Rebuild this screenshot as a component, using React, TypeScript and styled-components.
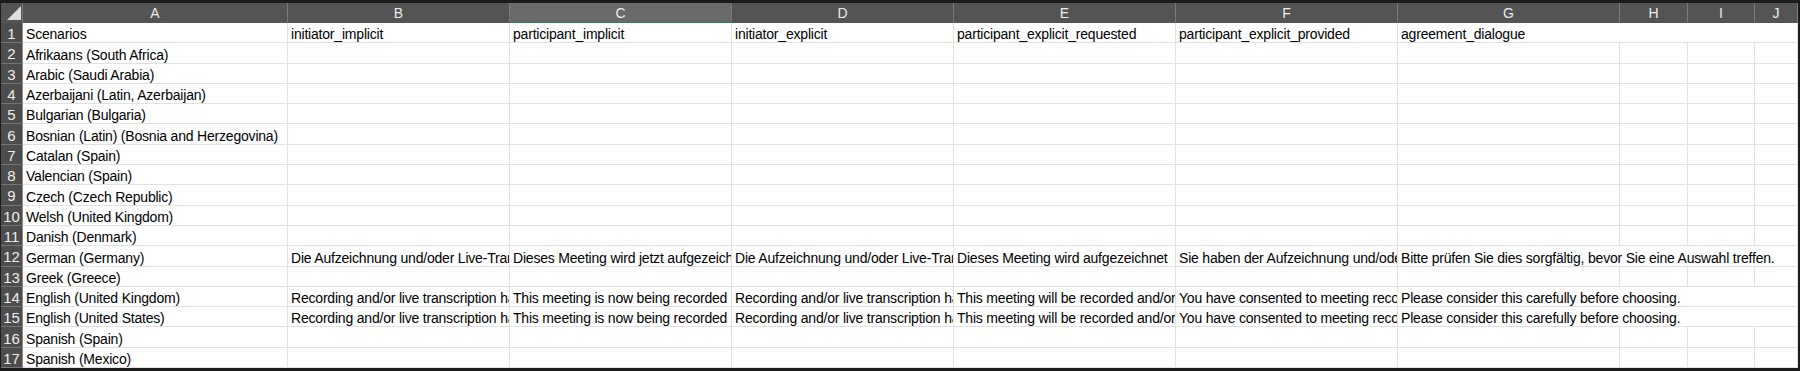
import React from 'react';
import styled, { createGlobalStyle } from 'styled-components';

const GlobalStyle = createGlobalStyle`
  html, body {
    margin: 0;
    padding: 0;
    background: #ffffff;
  }
`;

const COLUMNS = ['A', 'B', 'C', 'D', 'E', 'F', 'G', 'H', 'I', 'J'];
const SELECTED_COL = 'C';

const de = [
  'Die Aufzeichnung und/oder Live-Transkription hat begonnen.',
  'Dieses Meeting wird jetzt aufgezeichnet und/oder transkribiert.',
  'Die Aufzeichnung und/oder Live-Transkription hat begonnen.',
  'Dieses Meeting wird aufgezeichnet',
  'Sie haben der Aufzeichnung und/oder Transkription zugestimmt.',
  'Bitte prüfen Sie dies sorgfältig, bevor Sie eine Auswahl treffen.',
];

const en = [
  'Recording and/or live transcription has started.',
  'This meeting is now being recorded and/or transcribed.',
  'Recording and/or live transcription has started.',
  'This meeting will be recorded and/or transcribed.',
  'You have consented to meeting recording and/or transcription.',
  'Please consider this carefully before choosing.',
];

const rows: string[][] = [
  ['Scenarios', 'initiator_implicit', 'participant_implicit', 'initiator_explicit', 'participant_explicit_requested', 'participant_explicit_provided', 'agreement_dialogue'],
  ['Afrikaans (South Africa)'],
  ['Arabic (Saudi Arabia)'],
  ['Azerbaijani (Latin, Azerbaijan)'],
  ['Bulgarian (Bulgaria)'],
  ['Bosnian (Latin) (Bosnia and Herzegovina)'],
  ['Catalan (Spain)'],
  ['Valencian (Spain)'],
  ['Czech (Czech Republic)'],
  ['Welsh (United Kingdom)'],
  ['Danish (Denmark)'],
  ['German (Germany)', ...de],
  ['Greek (Greece)'],
  ['English (United Kingdom)', ...en],
  ['English (United States)', ...en],
  ['Spanish (Spain)'],
  ['Spanish (Mexico)'],
];

const Sheet = styled.div`
  box-sizing: border-box;
  width: 1800px;
  height: 371px;
  border-style: solid;
  border-color: #1b1b1b;
  border-width: 3px 2px 3px 1px;
  display: grid;
  grid-template-columns: 22px 265px repeat(6, 222px) 68px 67px 43px;
  grid-template-rows: 20px repeat(17, minmax(0, 1fr));
  overflow: hidden;
  background: #ffffff;
  font-family: 'Liberation Sans', Arial, sans-serif;
  font-size: 14px;
`;

const Corner = styled.div`
  position: relative;
  background: #545454;
  border-right: 1px solid #7a7a7a;

  &::after {
    content: '';
    position: absolute;
    right: 1px;
    bottom: 3px;
    width: 0;
    height: 0;
    border-style: solid;
    border-width: 0 0 14px 14px;
    border-color: transparent transparent #dedede transparent;
  }
`;

const ColHeader = styled.div<{ $selected?: boolean }>`
  box-sizing: border-box;
  display: flex;
  align-items: center;
  justify-content: center;
  padding-top: 2px;
  background: ${p => (p.$selected ? '#6a6a6a' : '#545454')};
  color: #ececec;
  border-right: 1px solid #7a7a7a;
  border-bottom: ${p => (p.$selected ? '1px solid #1e8449' : '1px solid #545454')};
  font-size: 14px;
  line-height: 17px;
`;

const RowHeader = styled.div`
  box-sizing: border-box;
  display: flex;
  align-items: center;
  justify-content: center;
  padding-top: 3px;
  background: #4d4d4d;
  color: #ececec;
  border-bottom: 1px solid #767676;
  border-right: 1px solid #8a8a8a;
  font-size: 15px;
  line-height: 16px;
  overflow: hidden;
`;

const Cell = styled.div<{ $span?: number }>`
  box-sizing: border-box;
  display: flex;
  align-items: flex-end;
  padding: 0 3px;
  min-width: 0;
  grid-column: ${p => (p.$span && p.$span > 1 ? `span ${p.$span}` : 'auto')};
  border-right: 1px solid #e1e1e1;
  border-bottom: 1px solid #e1e1e1;
  color: #000000;
  letter-spacing: -0.2px;
  white-space: nowrap;
  overflow: hidden;
  line-height: 15px;
`;

export default function App() {
  return (
    <>
      <GlobalStyle />
      <Sheet>
        <Corner />
        {COLUMNS.map(c => (
          <ColHeader key={c} $selected={c === SELECTED_COL}>
            {c}
          </ColHeader>
        ))}
        {rows.map((row, r) => {
          const cells: React.ReactNode[] = [];
          let i = 0;
          while (i < COLUMNS.length) {
            const value = row[i] ?? '';
            let span = 1;
            // the last filled cell of a row spills over the empty ones to its right
            if (value && i > 0 && i === row.length - 1) {
              span = COLUMNS.length - i;
            }
            cells.push(
              <Cell key={`${r}-${i}`} $span={span}>
                {value}
              </Cell>
            );
            i += span;
          }
          return (
            <React.Fragment key={r}>
              <RowHeader>{r + 1}</RowHeader>
              {cells}
            </React.Fragment>
          );
        })}
      </Sheet>
    </>
  );
}
